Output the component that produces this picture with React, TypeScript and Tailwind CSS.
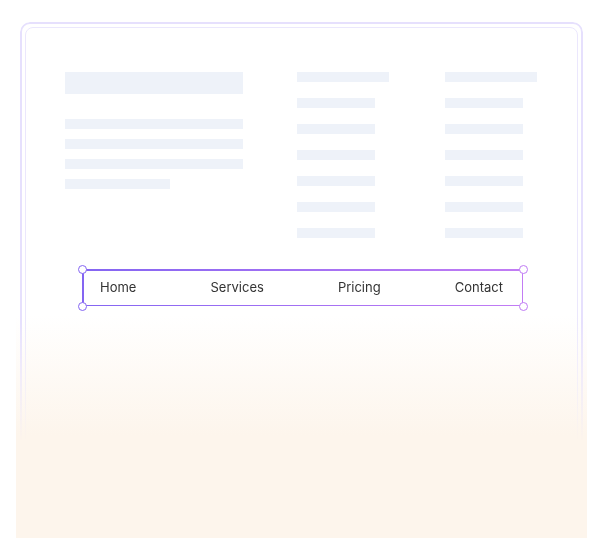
import React from 'react';

const navItems = ['Home', 'Services', 'Pricing', 'Contact'];

function Bar({ className }: { className: string }) {
  return <div className={`bg-[#eef2f9] ${className}`} />;
}

function Handle({ className }: { className: string }) {
  return (
    <span
      className={`absolute h-[9px] w-[9px] rounded-full border-[1.5px] bg-white ${className}`}
    />
  );
}

function LinkColumn() {
  return (
    <div className="flex w-[92px] flex-col gap-[16px]">
      <Bar className="h-[10px] w-[92px]" />
      {[0, 1, 2, 3, 4, 5].map((i) => (
        <Bar key={i} className="h-[10px] w-[78px]" />
      ))}
    </div>
  );
}

export default function App() {
  return (
    <div className="h-[538px] w-[601px] bg-white font-['Inter',sans-serif]">
      <div className="ml-[16px] h-[538px] w-[571px] bg-[linear-gradient(to_bottom,#ffffff_315px,#fdf5ec_435px)] px-[4px] pt-[22px]">
        <div className="h-[440px] rounded-[10px] border-2 border-[#e6e0fd] p-[3px] [mask-image:linear-gradient(to_bottom,black_300px,transparent_420px)]">
          <div className="h-full rounded-[8px] border-[1.5px] border-[#ebe7fd] pl-[39px] pr-[38px] pt-[44px]">
            <div className="flex">
              <div className="flex w-[178px] flex-col">
                <Bar className="h-[22px] w-[178px]" />
                <div className="mt-[25px] flex flex-col gap-[10px]">
                  <Bar className="h-[10px] w-[178px]" />
                  <Bar className="h-[10px] w-[178px]" />
                  <Bar className="h-[10px] w-[178px]" />
                  <Bar className="h-[10px] w-[105px]" />
                </div>
              </div>
              <div className="ml-[54px]">
                <LinkColumn />
              </div>
              <div className="ml-[56px]">
                <LinkColumn />
              </div>
            </div>

            <div className="relative ml-[17px] mt-[31px] h-[37px] w-[441px] bg-[linear-gradient(90deg,#8465f2,#c27cf4)] p-[1.5px]">
              <div className="flex h-full items-center justify-between bg-white pl-[16.5px] pr-[18.5px] text-[13px] font-normal text-[#333333]">
                {navItems.map((item) => (
                  <span key={item}>{item}</span>
                ))}
              </div>
              <Handle className="-left-[4.5px] -top-[4.5px] border-[#8465f2]" />
              <Handle className="-bottom-[4.5px] -left-[4.5px] border-[#8465f2]" />
              <Handle className="-right-[4.5px] -top-[4.5px] border-[#bf7bf4]" />
              <Handle className="-bottom-[4.5px] -right-[4.5px] border-[#bf7bf4]" />
            </div>
          </div>
        </div>
      </div>
    </div>
  );
}
